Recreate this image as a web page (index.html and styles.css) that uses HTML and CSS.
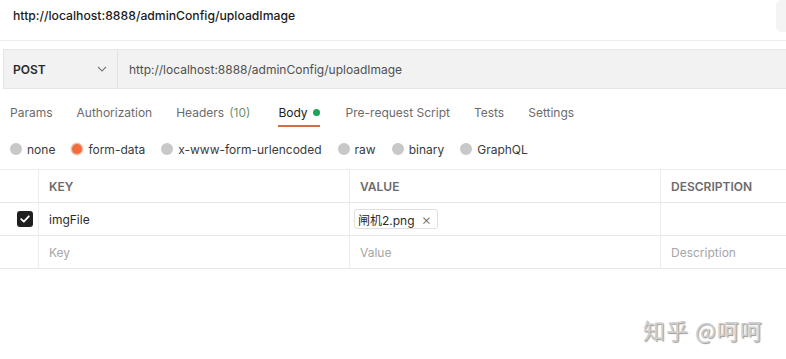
FILE: index.html
```html
<!DOCTYPE html>
<html lang="en">

<head>
    <meta charset="UTF-8">
    <meta name="viewport" content="width=device-width, initial-scale=1.0">
    <title>uploadImage</title>
    <link rel="stylesheet" href="styles.css">
</head>

<body>

    <div class="title-bar">
        <span class="title">http://localhost:8888/adminConfig/uploadImage</span>
        <span class="save-box"></span>
    </div>

    <div class="request-bar">
        <div class="method">
            <span>POST</span>
            <svg class="chevron" width="10" height="6" viewBox="0 0 10 6">
                <path d="M1 1l4 4 4-4" fill="none" stroke="#7a7a7a" stroke-width="1.1"/>
            </svg>
        </div>
        <div class="url">http://localhost:8888/adminConfig/uploadImage</div>
    </div>

    <nav class="tabs">
        <span class="tab">Params</span>
        <span class="tab">Authorization</span>
        <span class="tab">Headers <span class="count">(10)</span></span>
        <span class="tab active">Body <span class="dot"></span></span>
        <span class="tab">Pre-request Script</span>
        <span class="tab">Tests</span>
        <span class="tab">Settings</span>
    </nav>

    <div class="body-types">
        <label class="radio"><span class="circle"></span>none</label>
        <label class="radio"><span class="circle on"></span>form-data</label>
        <label class="radio"><span class="circle"></span>x-www-form-urlencoded</label>
        <label class="radio"><span class="circle"></span>raw</label>
        <label class="radio"><span class="circle"></span>binary</label>
        <label class="radio"><span class="circle"></span>GraphQL</label>
    </div>

    <div class="table">
        <div class="row head">
            <div class="cell check"></div>
            <div class="cell">KEY</div>
            <div class="cell">VALUE</div>
            <div class="cell">DESCRIPTION</div>
        </div>
        <div class="row">
            <div class="cell check">
                <span class="checkbox">
                    <svg width="10" height="8" viewBox="0 0 10 8">
                        <path d="M1.2 4.2l2.6 2.4L8.8 1.3" fill="none" stroke="#fff" stroke-width="1.8" stroke-linecap="round" stroke-linejoin="round"/>
                    </svg>
                </span>
            </div>
            <div class="cell">imgFile</div>
            <div class="cell"><span class="file-chip">闸机2.png <span class="close">×</span></span></div>
            <div class="cell"></div>
        </div>
        <div class="row">
            <div class="cell check"></div>
            <div class="cell placeholder">Key</div>
            <div class="cell placeholder">Value</div>
            <div class="cell placeholder">Description</div>
        </div>
    </div>

    <div class="watermark">知乎 @呵呵</div>

</body>

</html>
```

FILE: styles.css
```css
* {
    box-sizing: border-box;
}

body {
    margin: 0;
    width: 786px;
    height: 359px;
    overflow: hidden;
    background: #ffffff;
    color: #212121;
    font-family: Inter, "Noto Sans", "Noto Sans CJK SC", sans-serif;
    font-size: 12px;
    position: relative;
}

.title-bar {
    height: 41px;
    display: flex;
    align-items: flex-start;
    justify-content: space-between;
    padding-left: 13px;
    border-bottom: 1px solid #ececec;
    margin-bottom: 8px;
}

.title {
    font-weight: 500;
    font-size: 12.2px;
    color: #1c1c1c;
    margin-top: 8px;
}

.save-box {
    width: 10px;
    height: 32px;
    background: #f4f4f4;
    border-radius: 6px 0 0 6px;
}

.request-bar {
    margin-left: 3px;
    height: 40px;
    display: flex;
    background: #f2f2f2;
    border: 1px solid #e6e6e6;
    border-right: none;
}

.method {
    width: 114px;
    padding-left: 9px;
    padding-right: 10px;
    display: flex;
    align-items: center;
    justify-content: space-between;
    border-right: 1px solid #e2e2e2;
    font-weight: 600;
    color: #2a2a2a;
}

.url {
    display: flex;
    align-items: center;
    padding-left: 11px;
    color: #505050;
}

.tabs {
    display: flex;
    height: 30px;
    align-items: center;
    padding-left: 10px;
    gap: 24px;
    margin-top: 8px;
    color: #6b6b6b;
}

.tab {
    position: relative;
    height: 30px;
    display: flex;
    align-items: center;
    gap: 5px;
}

.count {
    color: #6f9370;
}

.tab.active {
    color: #212121;
    margin-left: 4px;
    margin-right: 2px;
}

.tab.active::after {
    content: "";
    position: absolute;
    left: 0;
    right: 0;
    bottom: 0;
    height: 2px;
    background: #d26d47;
}

.dot {
    width: 7px;
    height: 7px;
    border-radius: 50%;
    background: #1aa55a;
    margin-top: 1px;
}

.body-types {
    display: flex;
    height: 28px;
    align-items: center;
    padding-left: 10px;
    gap: 16px;
    margin-top: 8px;
    color: #3a3a3a;
}

.radio {
    display: flex;
    align-items: center;
    gap: 5px;
}

.circle {
    width: 12px;
    height: 12px;
    border-radius: 50%;
    background: #c8c8c8;
}

.circle.on {
    background: #f26b3a;
    box-shadow: 0 0 0 1.5px #e8c2b3;
    width: 10px;
    height: 10px;
    margin: 1px;
}

.table {
    margin-top: 6px;
    border-top: 1px solid #ececec;
}

.row {
    display: grid;
    grid-template-columns: 38px 311px 311px 1fr;
    height: 33px;
    border-bottom: 1px solid #e8e8e8;
}

.cell {
    display: flex;
    align-items: center;
    padding-left: 10px;
    border-left: 1px solid #ececec;
    color: #2a2a2a;
}

.cell.check {
    border-left: none;
    padding-left: 17px;
}

.head .cell {
    font-size: 12px;
    font-weight: 600;
    color: #6b6b6b;
}

.placeholder {
    color: #a6a6a6;
}

.checkbox {
    width: 16px;
    height: 16px;
    border-radius: 3px;
    background: #1f1f1f;
    display: flex;
    align-items: center;
    justify-content: center;
}

.file-chip {
    margin-left: -6px;
    height: 20px;
    padding: 0 6px 0 3px;
    border: 1px solid #e0e0e0;
    border-radius: 3px;
    display: flex;
    align-items: center;
    gap: 7px;
    color: #2a2a2a;
}

.close {
    color: #6b6b6b;
    font-size: 15px;
    font-weight: 300;
}

.watermark {
    position: absolute;
    left: 643px;
    top: 313px;
    font-size: 22px;
    color: #cfcfcf;
    letter-spacing: 1px;
    text-shadow: 1px 1px 1px #9a9a9a;
    font-family: "Noto Sans CJK SC", sans-serif;
}
```
